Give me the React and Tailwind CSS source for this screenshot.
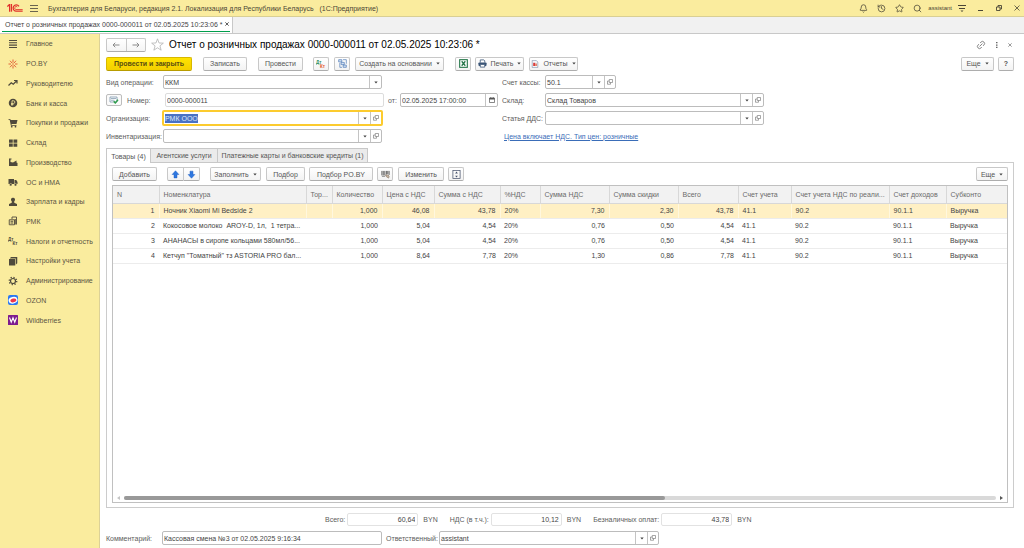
import { useEffect, useRef } from "react";
import { Bell, History, Star, Search, Link2 } from "lucide-react";

/* ---------- icons ---------- */

const Caret = () => (
  <svg viewBox="0 0 4 3" className="h-[3px] w-1 shrink-0" fill="#444">
    <path d="M.3.4h3.400L2 2.400z" />
  </svg>
);

const OpenIcon = () => (
  <svg viewBox="0 0 12 12" className="h-[6px] w-[6px]" fill="none" stroke="#777" strokeWidth="1.300">
    <path d="M4.500 1h6.500v6H4.500zM4.500 4H1v6.500h6V7" />
  </svg>
);

const CalendarIcon = () => (
  <svg viewBox="0 0 12 12" className="h-[6px] w-[6px]" fill="none" stroke="#555" strokeWidth="1.400">
    <path d="M1 2h10v9H1zM3.500 0v3M8.500 0v3" />
    <path d="M1 3.500h10" strokeWidth="2.600" />
  </svg>
);

const Arrow = ({ className }) => (
  <svg viewBox="0 0 16 12" className={className} fill="none" stroke="#8a8a8a" strokeWidth="2">
    <path d="M15 6H2M6.500 1.500L2 6l4.500 4.500" />
  </svg>
);

const BlueArrow = ({ className }) => (
  <svg viewBox="0 0 12 12" className={className} fill="#2f78e0" stroke="#1b5cc0" strokeWidth=".6">
    <path d="M6 1l4.500 5H8v4.500H4V6H1.500z" />
  </svg>
);

const DtKt = ({ top, bottom }) => (
  <svg viewBox="0 0 20 20" className="h-[10px] w-[10px]" fontFamily="Liberation Sans, Arial, sans-serif" fontWeight="bold" fontSize="9">
    <text x="0" y="9" fill={top}>Дт</text>
    <text x="8" y="18" fill={bottom}>Кт</text>
  </svg>
);

const Logo1C = () => (
  <svg viewBox="0 0 48 30" className="h-[10px] w-4" fill="none" stroke="#e0302a">
    <path d="M1 10.500l6-5.500h1v21" strokeWidth="4" />
    <path d="M13.500 3v23" strokeWidth="3.600" />
    <path d="M36 10a9.500 9.500 0 1 0-9 14.500H47" strokeWidth="3.600" />
    <path d="M31 12a4.500 4.500 0 1 0-4 7.500H47" strokeWidth="2.400" />
  </svg>
);

const D = "#4f4a3c";
const sideIcons = {
  main: <path d="M2 3h16M2 7.600h16M2 12.300h16M2 17h16" stroke={D} strokeWidth="2.200" />,
  poby: (
    <g stroke="#e0562f" strokeWidth="1.800" fill="none">
      <path d="M10 1v6M10 13v6M1 10h5M14 10h5M4 3.500l4 4.500M16 3.500L12 8M4 16.500L8 12M16 16.500L12 12" />
      <circle cx="10" cy="10" r="1.500" fill="#e0562f" stroke="none" />
    </g>
  ),
  chief: <path d="M1 15l5.500-5.500 4 3L17 6M12 5h6v6" stroke={D} strokeWidth="2.400" fill="none" />,
  bank: (
    <g>
      <circle cx="10" cy="10" r="8.500" fill={D} />
      <path d="M8 15.500V5.500h3a2.700 2.700 0 0 1 0 5.400H6M6 13.200h5" stroke="#faec9e" strokeWidth="1.600" fill="none" />
    </g>
  ),
  cart: (
    <g fill={D}>
      <path d="M1 2h3.500l.8 2H19l-2 8H7l.4 1.800H17v1.700H5.800L3.300 3.700H1z" />
      <circle cx="7.500" cy="17.300" r="1.700" />
      <circle cx="15" cy="17.300" r="1.700" />
    </g>
  ),
  store: <path d="M2 3h7.500v6.500H2zM11 3h7.500v6.500H11zM2 11h7.500v6.500H2zM11 11h7.500v6.500H11z" fill={D} />,
  factory: <path d="M2 18V3h5v2H5v5l5 1 7-4v4l2 1v6z" fill={D} />,
  truck: (
    <g fill={D}>
      <path d="M1 4h11v10H1zM13 6h3.500L19 10v4h-6z" />
      <circle cx="5.500" cy="15.500" r="2.600" stroke="#faec9e" />
      <circle cx="15" cy="15.500" r="2.600" stroke="#faec9e" />
    </g>
  ),
  person: <path d="M10 1.500a4 4 0 0 1 2.500 7.200v2.800l5.500 2.500V18H2v-4l5.500-2.500V8.700A4 4 0 0 1 10 1.500z" fill={D} />,
  pos: (
    <g fill="none" stroke={D} strokeWidth="1.800">
      <path d="M8 6V2h9v15M2.500 7.500H13V17.500H2.500z" />
      <path d="M5 10.500h5.500M5 14h5.500M14.500 6v11" strokeWidth="2" />
    </g>
  ),
  tax: (
    <g fill={D} fontFamily="Liberation Sans, Arial, sans-serif" fontWeight="bold" fontSize="9">
      <text x="0" y="9">Дт</text>
      <text x="9" y="18">Кт</text>
    </g>
  ),
  settings: (
    <g fill={D}>
      <path d="M2 6h12.500v13H2z" />
      <path d="M3.500 4.800L6 2h12.500v12.500l-2.800 2.700V4.800z" />
    </g>
  ),
  gear: (
    <g fill="none" stroke={D}>
      <circle cx="10" cy="10" r="5" strokeWidth="2.400" />
      <circle cx="10" cy="10" r="7.500" strokeWidth="2.500" strokeDasharray="2.500 3.390" />
    </g>
  ),
  ozon: (
    <g>
      <rect width="20" height="20" rx="4" fill="#2b78f2" />
      <ellipse cx="10" cy="10.500" rx="9" ry="6.500" fill="#fff" transform="rotate(-12 10 10)" />
      <ellipse cx="10.500" cy="11" rx="6" ry="3.800" fill="#f0354a" transform="rotate(-12 10 10)" />
    </g>
  ),
  wb: (
    <g>
      <rect width="20" height="20" rx="1" fill="#7d1c8f" />
      <path d="M3 5l3.500 9.500L10 5.500l3.500 9L17 5" stroke="#fff" strokeWidth="2.200" fill="none" />
    </g>
  ),
};

const menu = [
  ["main", "Главное"],
  ["poby", "PO.BY"],
  ["chief", "Руководителю"],
  ["bank", "Банк и касса"],
  ["cart", "Покупки и продажи"],
  ["store", "Склад"],
  ["factory", "Производство"],
  ["truck", "ОС и НМА"],
  ["person", "Зарплата и кадры"],
  ["pos", "РМК"],
  ["tax", "Налоги и отчетность"],
  ["settings", "Настройки учета"],
  ["gear", "Администрирование"],
  ["ozon", "OZON"],
  ["wb", "Wildberries"],
];

/* ---------- controls ---------- */

const Btn = ({ className = "px-3", children, ...rest }) => (
  <button
    type="button"
    className={`flex h-[14px] shrink-0 items-center justify-center gap-1 whitespace-nowrap rounded-[2px] border border-[#c8c8c8] border-b-[#adadad] bg-linear-to-b from-white to-[#f3f3f3] text-[#555] ${className}`}
    {...rest}
  >
    {children}
  </button>
);

const Field = ({ id, value, width, drop, open, calendar, focused, inputRef }) => (
  <div
    className={`flex shrink-0 overflow-hidden rounded-[2px] bg-white ${
      focused ? "-mx-px h-4 border-2 border-[#fccb2e]" : "h-[14px] border border-[#bcbcbc]"
    } ${width}`}
  >
    <input
      id={id}
      ref={inputRef}
      defaultValue={value}
      className="min-w-0 flex-1 bg-transparent px-px text-[#444] outline-none selection:bg-[#4a72c4] selection:text-[#dfe8fa]"
    />
    {drop && (
      <button type="button" aria-label="Выбрать" className="flex w-3 items-center justify-center border-l border-[#c4c4c4]">
        <Caret />
      </button>
    )}
    {open && (
      <button type="button" aria-label="Открыть" className="flex w-[11px] items-center justify-center border-l border-[#c4c4c4]">
        <OpenIcon />
      </button>
    )}
    {calendar && (
      <button type="button" aria-label="Календарь" className="flex w-3 items-center justify-center border-l border-[#c4c4c4]">
        <CalendarIcon />
      </button>
    )}
  </div>
);

const Total = ({ id, label, value }) => (
  <div className="flex items-center">
    <label htmlFor={id} className="whitespace-nowrap pr-[2px]">{label}</label>
    <input
      id={id}
      readOnly
      value={value}
      className="h-[13px] w-[71px] rounded-[2px] border border-[#e2e2e2] pr-[2px] text-right text-[#444] outline-none"
    />
    <span className="pl-[5px]">BYN</span>
  </div>
);

/* ---------- table ---------- */

const columns = [
  ["N", "w-[46px]", "text-right"],
  ["Номенклатура", "w-[147px]", ""],
  ["Тор...", "w-[26px]", ""],
  ["Количество", "w-[50px]", "text-right"],
  ["Цена с НДС", "w-[52px]", "text-right"],
  ["Сумма с НДС", "w-[66px]", "text-right"],
  ["%НДС", "w-[40px]", ""],
  ["Сумма НДС", "w-[69px]", "text-right"],
  ["Сумма скидки", "w-[69px]", "text-right"],
  ["Всего", "w-[60px]", "text-right"],
  ["Счет учета", "w-[53px]", ""],
  ["Счет учета НДС по реали...", "w-[98px]", ""],
  ["Счет доходов", "w-[57px]", ""],
  ["Субконто", "w-[62px]", ""],
];

const rows = [
  ["1", "Ночник Xiaomi Mi Bedside 2", "", "1,000", "46,08", "43,78", "20%", "7,30", "2,30", "43,78", "41.1", "90.2", "90.1.1", "Выручка"],
  ["2", "Кокосовое молоко  AROY-D, 1л,  1 тетра...", "", "1,000", "5,04", "4,54", "20%", "0,76", "0,50", "4,54", "41.1", "90.2", "90.1.1", "Выручка"],
  ["3", "АНАНАСЫ в сиропе кольцами 580мл/56...", "", "1,000", "5,04", "4,54", "20%", "0,76", "0,50", "4,54", "41.1", "90.2", "90.1.1", "Выручка"],
  ["4", "Кетчуп \"Томатный\" тз ASTORIA PRO бал...", "", "1,000", "8,64", "7,78", "20%", "1,30", "0,86", "7,78", "41.1", "90.2", "90.1.1", "Выручка"],
];

const ItemsTable = () => (
  <table className="w-full table-fixed border-collapse">
    <thead>
      <tr className="h-[17px] bg-[#f2f2f2] text-[#6a6a6a]">
        {columns.map(([name, width], i) => (
          <th key={name} className={`${width} overflow-hidden whitespace-nowrap border-b border-[#d8d8d8] p-0 pl-1 text-left font-normal ${i ? "border-l" : ""}`}>
            {name}
          </th>
        ))}
      </tr>
    </thead>
    <tbody className="text-[#444]">
      {rows.map((row, r) => (
        <tr key={row[0]} className={`h-[15px] ${r === 0 ? "bg-[#fff0c4]" : ""}`}>
          {row.map((cell, i) => (
            <td
              key={i}
              className={`overflow-hidden whitespace-pre border-b border-[#ececec] p-0 pl-1 pr-1 ${columns[i][2]} ${
                r === 0 && i ? "border-l border-l-[#fff7de]" : ""
              }`}
            >
              {cell}
            </td>
          ))}
        </tr>
      ))}
    </tbody>
  </table>
);

/* ---------- page ---------- */

export default function App() {
  const orgRef = useRef(null);
  useEffect(() => {
    orgRef.current?.focus();
    orgRef.current?.select();
  }, []);

  return (
    <div className="flex h-screen flex-col bg-white font-['Liberation_Sans',Arial,sans-serif] text-[7px] leading-[9px] text-[#5c5c5c]">
      <header className="flex h-[17px] shrink-0 items-center border-b border-[#d9cf94] bg-[#faec9e] pl-[7px] pr-1 text-[#4a4636]">
        <Logo1C />
        <button type="button" aria-label="Меню" className="ml-[7px] mr-[10px]">
          <svg viewBox="0 0 8 8" className="h-2 w-2" stroke="#6a6450" fill="none">
            <path d="M0 1.500h8M0 4.500h8M0 7.500h8" />
          </svg>
        </button>
        <h1 className="whitespace-pre">Бухгалтерия для Беларуси, редакция 2.1. Локализация для Республики Беларусь   (1С:Предприятие)</h1>
        <div className="ml-auto flex items-center gap-[9px]">
          <button type="button" aria-label="Уведомления"><Bell className="size-[9px]" /></button>
          <button type="button" aria-label="История"><History className="size-[9px]" /></button>
          <button type="button" aria-label="Избранное"><Star className="size-[9px]" /></button>
          <button type="button" aria-label="Поиск"><Search className="size-[9px]" /></button>
          <span className="-mx-[3px] text-[6px]">assistant</span>
          <button type="button" aria-label="Настройки">
            <svg viewBox="0 0 8 8" className="h-2 w-2" stroke="#4a4636" fill="none">
              <path d="M0 1.500h8M1 4.500h6" />
              <path d="M2.500 6.500h3L4 8z" fill="#4a4636" stroke="none" />
            </svg>
          </button>
          <button type="button" aria-label="Свернуть" className="ml-[3px]">
            <svg viewBox="0 0 6 8" className="h-2 w-[6px]" stroke="#4a4636"><path d="M0 6.500h5" /></svg>
          </button>
          <button type="button" aria-label="Развернуть" className="ml-[3px]">
            <svg viewBox="0 0 12 12" className="size-[6px]" stroke="#4a4636" strokeWidth="1.800" fill="none">
              <path d="M1 4h7v7H1zM4 4V1h7v7H8" />
            </svg>
          </button>
          <button type="button" aria-label="Закрыть" className="ml-[3px]">
            <svg viewBox="0 0 6 6" className="size-[6px]" stroke="#4a4636" strokeWidth=".8"><path d="M.5.5l5 5M5.500.5l-5 5" /></svg>
          </button>
        </div>
      </header>

      <div className="flex h-[17px] shrink-0 border-b border-[#c8c8c8] bg-[#f1f1f1]">
        <div className="flex border-r border-[#c8c8c8] bg-white px-[2px] pb-px">
          <div className="flex flex-col">
            <div className="flex flex-1 items-center pl-[3px] pr-px text-[#444]">
              <span className="whitespace-nowrap">Отчет о розничных продажах 0000-000011 от 02.05.2025 10:23:06 *</span>
              <button type="button" aria-label="Закрыть вкладку" className="ml-[2px]">
                <svg viewBox="0 0 6 6" className="size-[4px]" stroke="#444" strokeWidth="1.300"><path d="M.5.5l5 5M5.500.5l-5 5" /></svg>
              </button>
            </div>
            <div className="h-px bg-[#009e4c]" />
          </div>
        </div>
      </div>

      <div className="flex min-h-0 flex-1">
        <nav className="w-[100px] shrink-0 border-r border-[#dcd197] bg-[#faec9e]">
          <ul className="flex h-[296px] flex-col">
            {menu.map(([icon, text]) => (
              <li key={icon} className="flex flex-1 items-center">
                <a href="#" className="flex items-center gap-2 whitespace-nowrap pl-2 text-[#5a5544]">
                  <svg viewBox="0 0 20 20" className="size-[10px] shrink-0">{sideIcons[icon]}</svg>
                  {text}
                </a>
              </li>
            ))}
          </ul>
        </nav>

        <main className="flex min-w-0 flex-1 flex-col pl-[6px] pr-[10px]">
          <div className="flex h-[21px] shrink-0 items-center">
            <div className="flex h-[14px] w-10 rounded-[2px] border border-[#c8c8c8] border-b-[#adadad] bg-linear-to-b from-white to-[#f4f4f4]">
              <button type="button" aria-label="Назад" className="flex flex-1 items-center justify-center border-r border-[#c8c8c8]">
                <Arrow className="h-[6px] w-2" />
              </button>
              <button type="button" aria-label="Вперед" className="flex flex-1 items-center justify-center">
                <Arrow className="h-[6px] w-2 rotate-180" />
              </button>
            </div>
            <button type="button" aria-label="В избранное" className="ml-[5px] mr-[5px]">
              <svg viewBox="0 0 24 24" className="size-[13px]" fill="none" stroke="#b4b4b4" strokeWidth="1.500">
                <path d="M12 1.500l2.800 7.700 8 .3-6.300 5 2.200 8L12 18l-6.700 4.500 2.200-8-6.300-5 8-.3z" />
              </svg>
            </button>
            <h2 className="whitespace-nowrap text-[10px] leading-3 text-black">Отчет о розничных продажах 0000-000011 от 02.05.2025 10:23:06 *</h2>
            <div className="ml-auto flex items-center gap-[9px] pr-[2px] text-[#777]">
              <button type="button" aria-label="Ссылка"><Link2 className="size-[10px] -rotate-45" /></button>
              <button type="button" aria-label="Еще действия">
                <svg viewBox="0 0 4 6" className="h-[6px] w-1" fill="#666"><path d="M1 0h1.500v1.300H1zM1 2.400h1.500v1.300H1zM1 4.700h1.500V6H1z" /></svg>
              </button>
              <button type="button" aria-label="Закрыть форму">
                <svg viewBox="0 0 6 6" className="size-1" stroke="#666"><path d="M.5.5l5 5M5.500.5l-5 5" /></svg>
              </button>
            </div>
          </div>

          <div className="flex h-[17px] shrink-0 items-center">
            <button type="button" className="h-[14px] w-[86px] whitespace-nowrap rounded-[2px] border border-[#d8b800] border-b-[#b89c00] bg-linear-to-b from-[#ffe300] to-[#f3cf00] font-bold text-[#5a4f10]">
              Провести и закрыть
            </button>
            <Btn className="ml-[11px] w-11">Записать</Btn>
            <Btn className="ml-[11px] w-[45px]">Провести</Btn>
            <Btn className="ml-[10px] w-4" aria-label="Проводки"><DtKt top="#2f8f5b" bottom="#e0552b" /></Btn>
            <Btn className="ml-[5px] w-4" aria-label="Структура подчиненности">
              <svg viewBox="0 0 20 20" className="size-[9px] shrink-0" fill="#d5e3f5" stroke="#4a78b5" strokeWidth="1.500">
                <path d="M1.500 1.500h7v5h-7zM7 7.500h7v5H7zM11.500 13.500h7v5h-7z" />
                <path d="M11 1.500h7.500v9M4 9v9.500h5" fill="none" />
              </svg>
            </Btn>
            <Btn className="ml-[5px] w-[89px]">Создать на основании <Caret /></Btn>
            <Btn className="ml-[11px] w-4" aria-label="Excel">
              <svg viewBox="0 0 20 20" className="size-[9px] shrink-0">
                <rect x="1.500" y="1.500" width="17" height="17" fill="#fff" stroke="#227447" strokeWidth="2.400" />
                <path d="M6 5l8 10M14 5L6 15" stroke="#227447" strokeWidth="2.800" />
              </svg>
            </Btn>
            <Btn className="ml-1 w-[49px]">
              <svg viewBox="0 0 20 20" className="size-[9px]">
                <path d="M5 8V2h8l2 2v4" fill="#fff" stroke="#3a5577" strokeWidth="1.800" />
                <rect x="1" y="7.500" width="18" height="8" rx="2" fill="#3a5577" />
                <path d="M5 12h10v6H5z" fill="#fff" stroke="#3a5577" strokeWidth="1.800" />
              </svg>
              Печать <Caret />
            </Btn>
            <Btn className="ml-[5px] w-[49px]">
              <svg viewBox="0 0 20 20" className="size-[8px]">
                <path d="M3 1h10l4 4v14H3z" fill="#f3f5fa" stroke="#8391aa" strokeWidth="1.600" />
                <path d="M5.500 7h5v8h-5z" fill="#d93a3a" />
                <path d="M11 9h3.500v6H11z" fill="#e06a4a" />
              </svg>
              Отчеты <Caret />
            </Btn>
            <Btn className="ml-auto w-[33px]">Еще <Caret /></Btn>
            <Btn className="ml-1 w-4 font-bold">?</Btn>
          </div>

          <form className="flex shrink-0 pt-px" onSubmit={(e) => e.preventDefault()}>
            <div className="w-[396px] shrink-0">
              <div className="flex h-[18px] items-center">
                <label htmlFor="op" className="w-[57px] whitespace-nowrap">Вид операции:</label>
                <div className="relative h-[14px] w-[219px] rounded-[2px] border border-[#bcbcbc] bg-white">
                  <select id="op" className="block h-full w-full appearance-none bg-transparent px-px text-[#444] outline-none">
                    <option>ККМ</option>
                  </select>
                  <span className="pointer-events-none absolute inset-y-0 right-0 flex w-3 items-center justify-center border-l border-[#c4c4c4]">
                    <Caret />
                  </span>
                </div>
              </div>
              <div className="flex h-[18px] items-center">
                <button type="button" aria-label="Статус документа" className="flex h-3 w-4 items-center justify-center rounded-[2px] border border-[#bdbdbd] bg-[#fafafa]">
                  <svg viewBox="0 0 20 16" className="h-2 w-[10px]" fill="none">
                    <path d="M2 2h14v10H2z" fill="#fff" stroke="#7690a8" strokeWidth="1.500" />
                    <path d="M4 5h10M4 8.500h7" stroke="#7690a8" strokeWidth="1.400" />
                    <path d="M9.500 10.500l3 3.500L18 7.500" stroke="#2e9e4b" strokeWidth="2.800" />
                  </svg>
                </button>
                <label htmlFor="num" className="w-[38px] pl-[5px]">Номер:</label>
                <input id="num" defaultValue="0000-000011" className="ml-[5px] h-[14px] w-[219px] rounded-[2px] border border-[#dcdcdc] px-px text-[#444] outline-none" />
                <label htmlFor="date" className="w-4 pl-1">от:</label>
                <Field id="date" value="02.05.2025 17:00:00" width="w-[98px]" calendar />
              </div>
              <div className="flex h-[18px] items-center">
                <label htmlFor="org" className="w-[57px] whitespace-nowrap">Организация:</label>
                <Field id="org" value="РМК ООО" width="w-[221px]" drop open focused inputRef={orgRef} />
              </div>
              <div className="flex h-[18px] items-center">
                <label htmlFor="inv" className="w-[57px] whitespace-nowrap">Инвентаризация:</label>
                <Field id="inv" value="" width="w-[219px]" drop open />
              </div>
            </div>
            <div className="flex-1">
              <div className="flex h-[18px] items-center">
                <label htmlFor="cash" className="w-[43px] whitespace-nowrap">Счет кассы:</label>
                <Field id="cash" value="50.1" width="w-[71px]" drop open />
              </div>
              <div className="flex h-[18px] items-center">
                <label htmlFor="store" className="w-[43px]">Склад:</label>
                <Field id="store" value="Склад Товаров" width="w-[219px]" drop open />
              </div>
              <div className="flex h-[18px] items-center">
                <label htmlFor="dds" className="w-[43px] whitespace-nowrap">Статья ДДС:</label>
                <Field id="dds" value="" width="w-[219px]" drop open />
              </div>
              <div className="flex h-[18px] items-center">
                <a href="#" className="pl-[2px] text-[#3a6db8] underline">Цена включает НДС. Тип цен: розничные</a>
              </div>
            </div>
          </form>

          <div role="tablist" className="z-10 -mb-px mt-[3px] flex h-[15px] shrink-0 text-[#555]">
            <button type="button" role="tab" aria-selected="true" className="w-[45px] whitespace-nowrap border border-b-0 border-[#c8c8c8] bg-white">Товары (4)</button>
            <button type="button" role="tab" aria-selected="false" className="w-[67px] whitespace-nowrap border border-l-0 border-[#c8c8c8] bg-[#ebebeb]">Агентские услуги</button>
            <button type="button" role="tab" aria-selected="false" className="w-[150px] whitespace-nowrap border border-l-0 border-[#c8c8c8] bg-[#ebebeb]">Платежные карты и банковские кредиты (1)</button>
          </div>

          <section className="flex min-h-0 flex-1 flex-col border border-[#cccccc] px-[5px] pb-1">
            <div className="flex h-[22px] shrink-0 items-center">
              <Btn className="w-[45px]">Добавить</Btn>
              <div className="ml-[10px] flex">
                <Btn className="w-[17px] rounded-r-none" aria-label="Переместить вверх"><BlueArrow className="size-[9px] shrink-0" /></Btn>
                <Btn className="w-4 rounded-l-none border-l-0" aria-label="Переместить вниз"><BlueArrow className="size-[9px] shrink-0 rotate-180" /></Btn>
              </div>
              <Btn className="ml-[10px] w-[51px]">Заполнить <Caret /></Btn>
              <Btn className="ml-[5px] w-[39px]">Подбор</Btn>
              <Btn className="ml-1 w-16">Подбор PO.BY</Btn>
              <Btn className="ml-1 w-4" aria-label="Штрихкод">
                <svg viewBox="0 0 20 20" className="size-[9px] shrink-0" stroke="#555" fill="none">
                  <path d="M2 2v10M5 2v10M8.500 2v10M12 2v8M15 2v7M18 2v9" strokeWidth="2" />
                  <path d="M2 14h7" strokeWidth="1.500" />
                  <path d="M10 11h6l2 3-1 4-5-3z" fill="#c9b8a6" stroke="#7d6a5a" strokeWidth="1.300" />
                </svg>
              </Btn>
              <Btn className="ml-[5px] w-[46px]">Изменить</Btn>
              <Btn className="ml-1 w-4" aria-label="Развернуть таблицу">
                <svg viewBox="0 0 20 20" className="size-[9px] shrink-0" stroke="#44506a" fill="none">
                  <rect x="2" y="1" width="16" height="18" strokeWidth="1.600" />
                  <path d="M7 7.500l3-4 3 4zM7 12.500l3 4 3-4z" fill="#44506a" stroke="none" />
                </svg>
              </Btn>
              <Btn className="ml-auto w-8">Еще <Caret /></Btn>
            </div>
            <div className="flex min-h-0 flex-1 flex-col border border-[#c0c0c0]">
              <div className="min-h-0 flex-1 overflow-hidden">
                <ItemsTable />
              </div>
              <div className="flex h-2 shrink-0 items-center gap-1 px-1">
                <svg viewBox="0 0 3 4" className="h-1 w-[3px]" fill="#c4c4c4"><path d="M3 0v4L0 2z" /></svg>
                <div className="h-1 flex-1 rounded-full bg-[#d9d9d9]">
                  <div className="h-1 w-[62%] rounded-full bg-[#999]" />
                </div>
                <svg viewBox="0 0 3 4" className="h-1 w-[3px]" fill="#555"><path d="M0 0v4l3-2z" /></svg>
              </div>
            </div>
          </section>

          <div className="flex h-[23px] shrink-0 items-center gap-3 pl-[219px]">
            <Total id="t1" label="Всего:" value="60,64" />
            <Total id="t2" label="НДС (в т.ч.):" value="10,12" />
            <Total id="t3" label="Безналичных оплат:" value="43,78" />
          </div>
          <div className="mb-[3px] flex h-[14px] shrink-0 items-center">
            <label htmlFor="comment" className="w-[56px]">Комментарий:</label>
            <Field id="comment" value="Кассовая смена №3 от 02.05.2025 9:16:34" width="w-[220px]" />
            <label htmlFor="resp" className="w-[57px] whitespace-nowrap pl-1">Ответственный:</label>
            <Field id="resp" value="assistant" width="w-[220px]" drop open />
          </div>
        </main>
      </div>
    </div>
  );
}
